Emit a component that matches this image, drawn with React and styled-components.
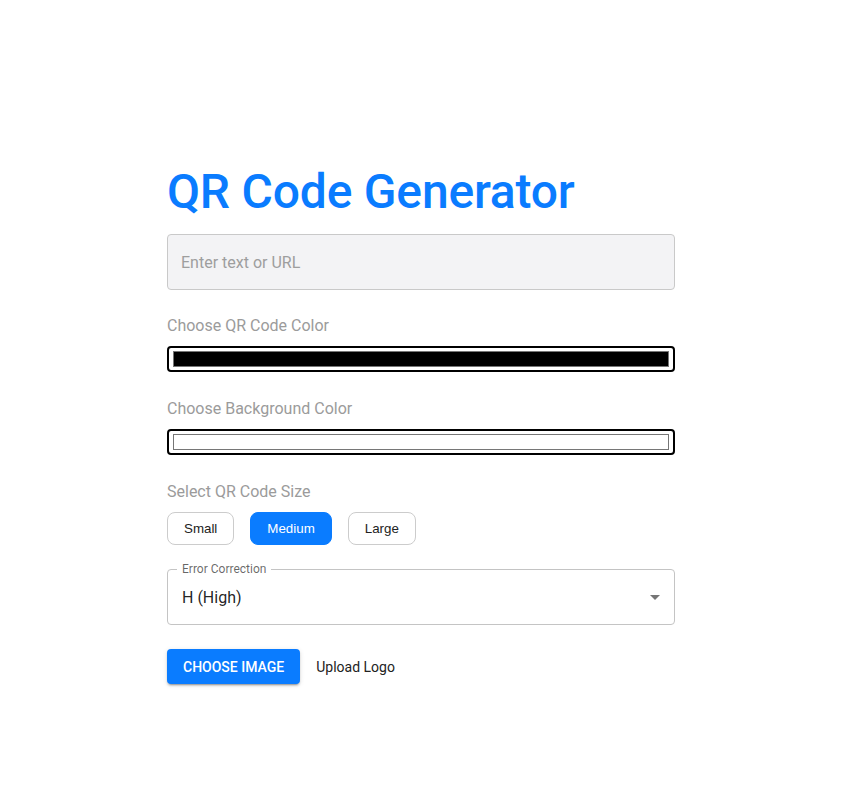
import React, { useState } from 'react';
import styled, { createGlobalStyle } from 'styled-components';

const GlobalStyle = createGlobalStyle`
  body {
    margin: 0;
    background: #fff;
    font-family: Roboto, "Helvetica Neue", Arial, sans-serif;
  }
`;

const sizes = ['Small', 'Medium', 'Large'];

const App = () => {
  const [text, setText] = useState('');
  const [fg, setFg] = useState('#000000');
  const [bg, setBg] = useState('#ffffff');
  const [size, setSize] = useState('Medium');

  return (
    <Page>
      <GlobalStyle />
      <Container>
        <Title>QR Code Generator</Title>
        <TextInput
          placeholder="Enter text or URL"
          value={text}
          onChange={(e) => setText(e.target.value)}
        />

        <Field>
          <Label>Choose QR Code Color</Label>
          <ColorInput type="color" value={fg} onChange={(e) => setFg(e.target.value)} />
        </Field>

        <Field>
          <Label>Choose Background Color</Label>
          <ColorInput type="color" value={bg} onChange={(e) => setBg(e.target.value)} />
        </Field>

        <Field $last>
          <Label>Select QR Code Size</Label>
          <SizeRow>
            {sizes.map((s) => (
              <SizeButton key={s} $active={size === s} onClick={() => setSize(s)}>
                {s}
              </SizeButton>
            ))}
          </SizeRow>
        </Field>

        <SelectBox>
          <FloatLabel>Error Correction</FloatLabel>
          <SelectValue>H (High)</SelectValue>
          <svg width="24" height="24" viewBox="0 0 24 24" fill="rgba(0,0,0,0.54)">
            <path d="M7 10l5 5 5-5z" />
          </svg>
        </SelectBox>

        <UploadRow>
          <ContainedButton>Choose Image</ContainedButton>
          <UploadText>Upload Logo</UploadText>
        </UploadRow>
      </Container>
    </Page>
  );
};

export default App;

// Styled Components
const Page = styled.div`
  min-height: 786px;
  padding: 164px 0 0 167px;
  box-sizing: border-box;
`;

const Container = styled.div`
  width: 508px;
  display: flex;
  flex-direction: column;
`;

const Title = styled.h1`
  margin: 0 0 14px;
  font-size: 48px;
  font-weight: 500;
  color: #0a7cff;
  line-height: 56px;
  letter-spacing: -0.2px;
`;

const TextInput = styled.input`
  box-sizing: border-box;
  height: 56px;
  width: 100%;
  padding: 0 13px;
  border: 1px solid #c9c9c9;
  border-radius: 4px;
  background: #f3f3f5;
  font-family: inherit;
  font-size: 16px;
  color: #222;
  outline: none;
  margin-bottom: 26px;

  &::placeholder {
    color: #9e9e9e;
  }
`;

const Field = styled.div`
  display: flex;
  flex-direction: column;
  margin-bottom: ${(p) => (p.$last ? '24px' : '27px')};
`;

const Label = styled.label`
  font-size: 16px;
  line-height: 19px;
  color: #9b9b9b;
  margin-bottom: 11px;
`;

const ColorInput = styled.input`
  -webkit-appearance: none;
  appearance: none;
  box-sizing: border-box;
  width: 100%;
  height: 26px;
  margin: 0;
  padding: 3px 4px;
  border: 2px solid #000;
  border-radius: 4px;
  background: #fff;
  cursor: pointer;

  &::-webkit-color-swatch-wrapper {
    padding: 0;
  }
  &::-webkit-color-swatch {
    border: 1px solid #767676;
    border-radius: 0;
  }
`;

const SizeRow = styled.div`
  display: flex;
  gap: 16px;
`;

const SizeButton = styled.button`
  height: 33px;
  padding: 0 16px;
  border-radius: 8px;
  border: 1px solid ${(p) => (p.$active ? '#0a7cff' : '#cccccc')};
  background: ${(p) => (p.$active ? '#0a7cff' : '#fff')};
  color: ${(p) => (p.$active ? '#fff' : '#222')};
  font-family: "Liberation Sans", Arial, sans-serif;
  font-size: 13.333px;
  cursor: pointer;
`;

const SelectBox = styled.div`
  position: relative;
  box-sizing: border-box;
  height: 56px;
  display: flex;
  align-items: center;
  justify-content: space-between;
  padding: 0 7px 0 14px;
  border: 1px solid #c4c4c4;
  border-radius: 4px;
  margin-bottom: 24px;
`;

const FloatLabel = styled.span`
  position: absolute;
  top: -8px;
  left: 9px;
  padding: 0 5px;
  background: #fff;
  font-size: 12px;
  line-height: 14px;
  color: rgba(0, 0, 0, 0.6);
`;

const SelectValue = styled.span`
  font-size: 16px;
  color: rgba(0, 0, 0, 0.87);
`;

const UploadRow = styled.div`
  display: flex;
  align-items: center;
  gap: 16px;
`;

const ContainedButton = styled.button`
  height: 35px;
  padding: 0 16px;
  border: none;
  border-radius: 4px;
  background: #0a7cff;
  color: #fff;
  font-family: inherit;
  font-size: 14px;
  font-weight: 500;
  text-transform: uppercase;
  box-shadow: 0 3px 1px -2px rgba(0, 0, 0, 0.2), 0 2px 2px 0 rgba(0, 0, 0, 0.14),
    0 1px 5px 0 rgba(0, 0, 0, 0.12);
  cursor: pointer;
`;

const UploadText = styled.span`
  font-size: 14px;
  color: #222;
`;
